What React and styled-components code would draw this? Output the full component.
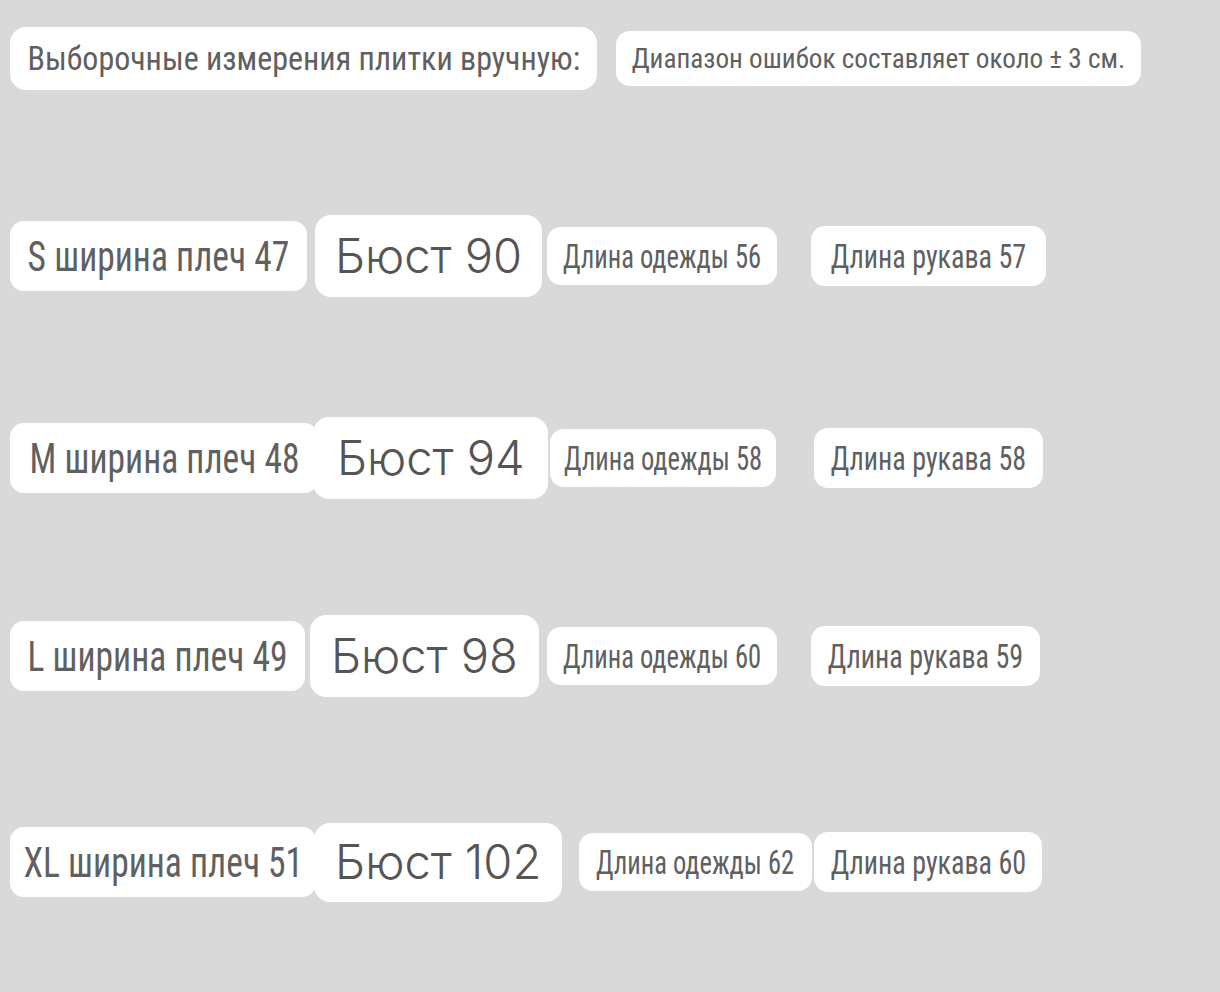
import React from "react"
import styled, { createGlobalStyle } from "styled-components"

const GlobalStyle = createGlobalStyle`
  body {
    margin: 0;
    background: #d9d9d9;
    font-family: "Roboto Condensed", "Roboto", sans-serif;
    color: #606060;
  }
`

const rows = [
  { size: "S", shoulder: 47, bust: 90, length: 56, sleeve: 57, w: [297, 227, 230, 235], gap: [8, 5, 34], h: 82 },
  { size: "M", shoulder: 48, bust: 94, length: 58, sleeve: 58, w: [308, 235, 226, 229], gap: [-5, 2, 38], h: 82 },
  { size: "L", shoulder: 49, bust: 98, length: 60, sleeve: 59, w: [295, 229, 230, 229], gap: [5, 8, 34], h: 82 },
  { size: "XL", shoulder: 51, bust: 102, length: 62, sleeve: 60, w: [306, 248, 233, 228], gap: [-2, 17, 2], h: 79 },
]

const after = [120, 116, 124, 0]

const Page = styled.div`
  width: 1220px;
  height: 992px;
  padding: 27px 0 0 10px;
  box-sizing: border-box;
  display: flex;
  flex-direction: column;
`

const Header = styled.div`
  display: flex;
  align-items: center;
  gap: 19px;
  height: 63px;
  margin-bottom: 125px;
`

const SizeRow = styled.div`
  display: flex;
  align-items: center;
  height: 82px;
  margin-bottom: ${(p) => p.$after}px;
`

const Pill = styled.div`
  flex: none;
  display: flex;
  align-items: center;
  justify-content: center;
  box-sizing: border-box;
  width: ${(p) => p.$w}px;
  height: ${(p) => p.$h}px;
  margin-left: ${(p) => p.$gap || 0}px;
  background: #fff;
  border-radius: ${(p) => p.$r || 14}px;
  font-size: ${(p) => p.$fs}px;
  font-weight: 400;
  white-space: nowrap;
  line-height: 1;
`

const BustPill = styled(Pill)`
  font-family: "Inter", "Noto Sans", sans-serif;
  font-weight: 350;
  color: #555;
`

const Label = styled.span`
  display: inline-block;
  transform: scaleX(${(p) => p.$sx || 1});
  transform-origin: center;
`

const App = () => {
  return (
    <>
      <GlobalStyle />
      <Page>
        <Header>
          <Pill $w={587} $h={63} $fs={33} $r={16}>
            <Label $sx={0.97}>Выборочные измерения плитки вручную:</Label>
          </Pill>
          <Pill $w={525} $h={55} $fs={28} $r={14}>
            <Label $sx={0.97}>Диапазон ошибок составляет около ± 3 см.</Label>
          </Pill>
        </Header>
        {rows.map((r, i) => (
          <SizeRow key={r.size} $after={after[i]}>
            <Pill $w={r.w[0]} $h={70} $fs={43} $r={14}>
              <Label $sx={0.826}>
                {r.size} ширина плеч {r.shoulder}
              </Label>
            </Pill>
            <BustPill $w={r.w[1]} $h={r.h} $gap={r.gap[0]} $fs={48} $r={16}>
              <Label $sx={0.98}>Бюст {r.bust}</Label>
            </BustPill>
            <Pill $w={r.w[2]} $h={58} $gap={r.gap[1]} $fs={34} $r={14}>
              <Label $sx={0.78}>Длина одежды {r.length}</Label>
            </Pill>
            <Pill $w={r.w[3]} $h={60} $gap={r.gap[2]} $fs={34} $r={14}>
              <Label $sx={0.825}>Длина рукава {r.sleeve}</Label>
            </Pill>
          </SizeRow>
        ))}
      </Page>
    </>
  )
}

export default App
